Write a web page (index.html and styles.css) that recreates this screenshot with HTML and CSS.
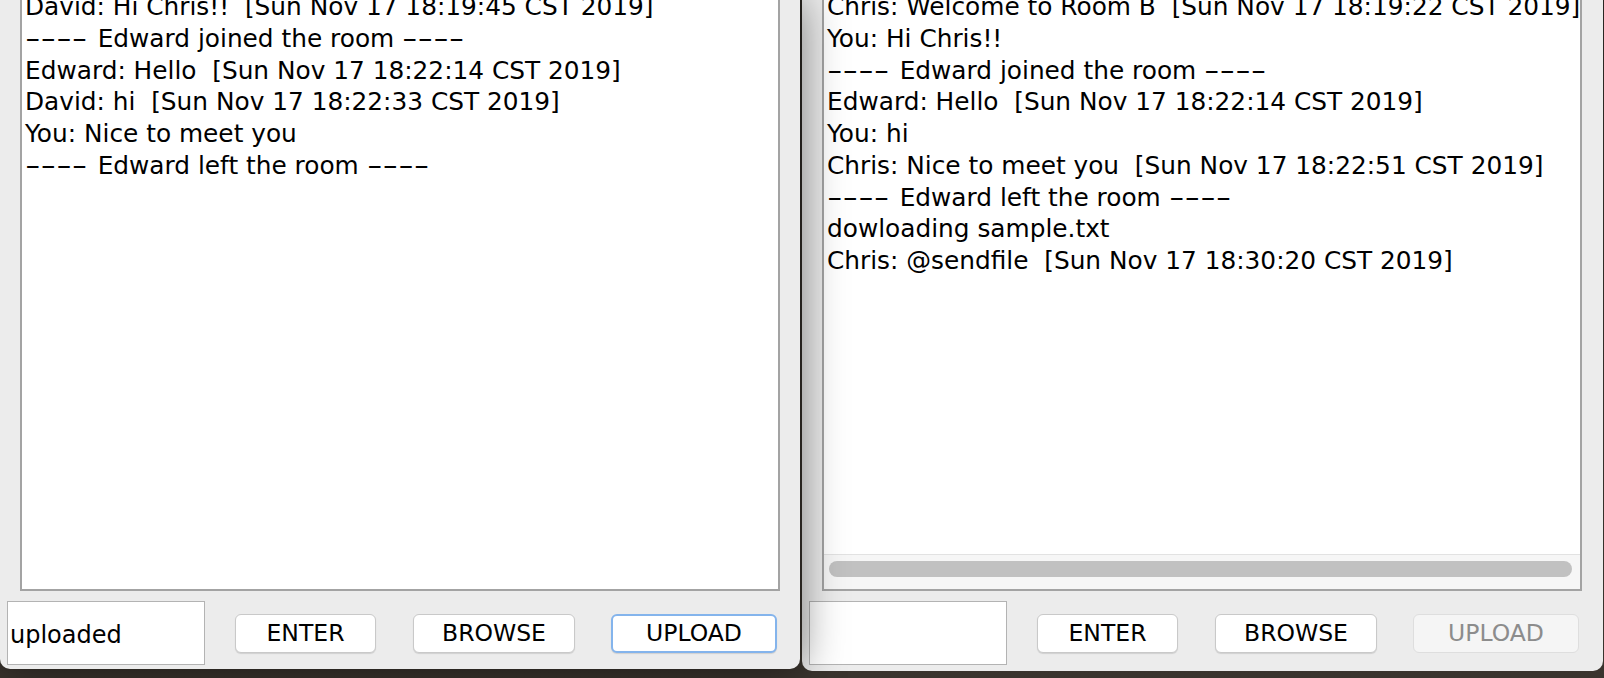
FILE: index.html
```html
<!DOCTYPE html>
<html lang="en">
<head>
<meta charset="utf-8">
<title>Chat rooms</title>
<link rel="stylesheet" href="styles.css">
</head>
<body>
<div class="desk">
  <section class="win win-a">
    <div class="log">
      <div class="lines"><div class="ln">David: Hi Chris!!  [Sun Nov 17 18:19:45 CST 2019]</div><div class="ln"><span class="dash">----</span> Edward joined the room <span class="dash">----</span></div><div class="ln">Edward: Hello  [Sun Nov 17 18:22:14 CST 2019]</div><div class="ln">David: hi  [Sun Nov 17 18:22:33 CST 2019]</div><div class="ln">You: Nice to meet you</div><div class="ln"><span class="dash">----</span> Edward left the room <span class="dash">----</span></div></div>
    </div>
    <div class="controls">
      <div class="field">uploaded</div>
      <button class="btn btn-enter">ENTER</button>
      <button class="btn btn-browse">BROWSE</button>
      <button class="btn btn-upload focus">UPLOAD</button>
    </div>
  </section>
  <section class="win win-b">
    <div class="log">
      <div class="lines"><div class="ln">Chris: Welcome to Room B  [Sun Nov 17 18:19:22 CST 2019]</div><div class="ln">You: Hi Chris!!</div><div class="ln"><span class="dash">----</span> Edward joined the room <span class="dash">----</span></div><div class="ln">Edward: Hello  [Sun Nov 17 18:22:14 CST 2019]</div><div class="ln">You: hi</div><div class="ln">Chris: Nice to meet you  [Sun Nov 17 18:22:51 CST 2019]</div><div class="ln"><span class="dash">----</span> Edward left the room <span class="dash">----</span></div><div class="ln">dowloading sample.txt</div><div class="ln">Chris: @sendfile  [Sun Nov 17 18:30:20 CST 2019]</div></div>
      <div class="hscroll"><div class="thumb"></div></div>
    </div>
    <div class="controls">
      <div class="field"></div>
      <button class="btn btn-enter">ENTER</button>
      <button class="btn btn-browse">BROWSE</button>
      <button class="btn btn-upload" disabled>UPLOAD</button>
    </div>
  </section>
</div>
</body>
</html>
```
FILE: styles.css
```css
html, body {
  margin: 0;
  height: 100%;
}
body {
  background: #302b27;
  overflow: hidden;
  font-family: "DejaVu Sans", "Liberation Sans", sans-serif;
  color: #000;
}
.desk {
  display: flex;
  gap: 2px;
  width: 1604px;
  height: 678px;
  align-items: flex-start;
  background: linear-gradient(180deg, #2a2622, #3a342e);
}
.win {
  background: #ececec;
  display: flex;
  flex-direction: column;
  border-radius: 0 0 10px 10px;
  box-sizing: border-box;
}
.win-a {
  width: 800px;
  height: 669px;
  position: relative;
  z-index: 1;
  box-shadow: 0 0 44px rgba(0, 0, 0, 0.5);
  padding-bottom: 4px;
}
.win-b {
  width: 801px;
  height: 671px;
  padding-bottom: 6px;
}
.log {
  margin: -11px 20px 0 20px;
  border: 2px solid #a3a3a3;
  background: #fff;
  flex: 1;
  min-height: 0;
  display: flex;
  flex-direction: column;
  overflow: hidden;
}
.win-b .log {
  margin-right: 21px;
}
.lines {
  flex: 1;
  min-height: 0;
  padding-left: 3px;
  font-size: 24.8px;
  line-height: 31.75px;
  white-space: pre;
  overflow: hidden;
}
.dash {
  display: inline-block;
  transform: scaleX(1.74);
  transform-origin: 0 50%;
  margin-right: 29px;
}
.hscroll {
  height: 28px;
  flex: none;
  border-top: 1px solid #e2e2e2;
  background: #f6f6f6;
  padding: 6px 8px 0 5px;
}
.thumb {
  height: 16px;
  border-radius: 8px;
  background: #c1c1c1;
}
.controls {
  display: flex;
  align-items: center;
  padding: 10px 0 0 7px;
  height: 64px;
  flex: none;
}
.field {
  width: 198px;
  height: 64px;
  box-sizing: border-box;
  border: 1px solid #b3b3b3;
  background: #fff;
  font-size: 24px;
  padding-left: 2px;
  display: flex;
  align-items: center;
  padding-top: 3px;
}
.btn {
  height: 39px;
  box-sizing: border-box;
  font-family: "DejaVu Sans", "Liberation Sans", sans-serif;
  font-size: 23.5px;
  border-radius: 6px;
  border: 1px solid #c9c9c9;
  background: #fff;
  box-shadow: 0 1px 1px rgba(0, 0, 0, 0.12);
  padding: 0;
  color: #000;
}
.btn-enter {
  width: 141px;
  margin-left: 30px;
}
.btn-browse {
  width: 162px;
  margin-left: 37px;
}
.btn-upload {
  width: 166px;
  margin-left: 36px;
}
.btn.focus {
  border: 2px solid #84b4ec;
}
.btn[disabled] {
  background: #f5f5f5;
  color: #8c8c8c;
  border-color: #dedede;
  box-shadow: none;
}
```
